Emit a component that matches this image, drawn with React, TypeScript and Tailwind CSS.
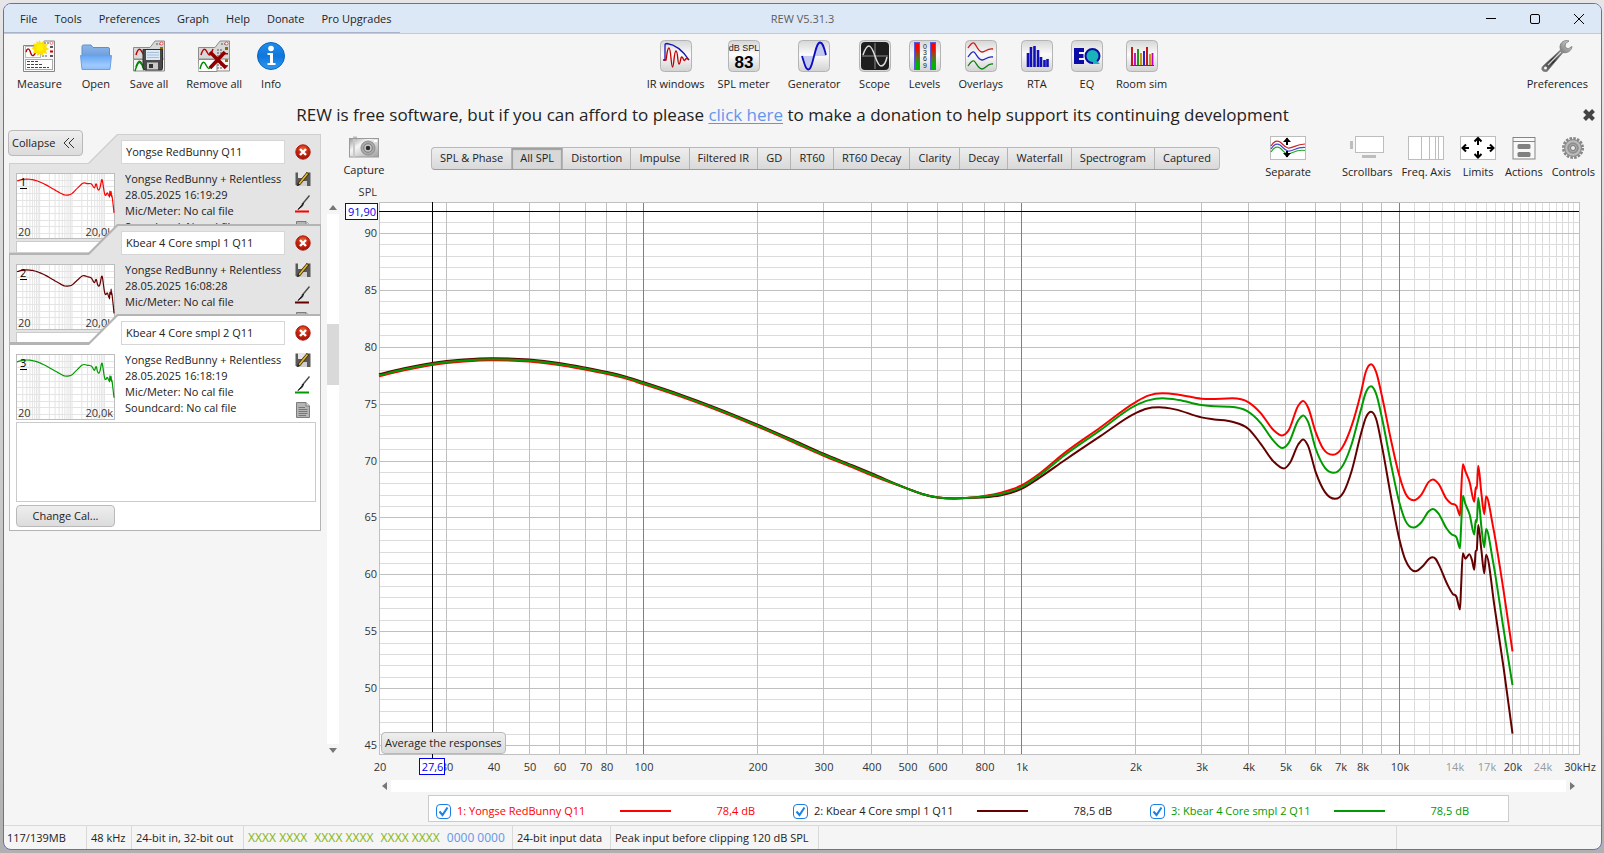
import { useLayoutEffect, useRef, useState } from "react";
import type { ReactNode } from "react";

type Point = [number, number];

/* ------------------------------------------------------------------ data */

const PLOT_W = 1200;
const PLOT_H = 551;
const X_MIN = Math.log10(20);
const X_SPAN = Math.log10(30000) - X_MIN;

const bass: Point[] = [
  [0, 172], [24, 166.3], [53, 160.7], [85, 157.3], [113, 156], [150, 157.3], [180, 160.7], [206, 165.3],
  [228, 169.7], [247, 174.3], [264, 179.7], [301, 192], [338, 205.7], [378, 222], [411, 236.3], [444, 251],
  [473, 262.7], [493, 271], [529, 285.3], [544, 290.7], [559, 294], [575, 295], [591, 294.3],
];

/* Treble samples use a finer grid: 2.8 steps per plot unit across, 3 down. */
const fine = (points: Point[]): Point[] => points.map(([x, y]) => [x / 2.8 + 621, y / 3 + 137]);
const lowEnd = (shift: number): Point[] => bass.map(([x, y]) => [x, x < 520 ? y + shift : y]);

const redCurve: Point[] = [
  ...lowEnd(1),
  ...fine([
    [-40, 466], [0, 457], [60, 435], [110, 400], [180, 338], [280, 262], [380, 185], [415, 166], [455, 159], [500, 163],
    [564, 175], [590, 176], [650, 174], [695, 185], [730, 218], [765, 268], [790, 285], [808, 270], [835, 196],
    [849, 182], [862, 200], [884, 275], [905, 325], [932, 343], [958, 322], [985, 255], [1010, 160], [1025, 92],
    [1039, 72], [1053, 95], [1070, 170], [1095, 300], [1118, 405], [1135, 458], [1158, 479], [1180, 462],
    [1200, 425], [1212, 417], [1228, 430], [1250, 475], [1262, 488], [1278, 496], [1288, 525], [1291, 460], [1296, 371],
    [1303, 392], [1315, 425], [1328, 484], [1332, 440], [1335, 445], [1339, 376], [1348, 460], [1356, 521],
    [1361, 467], [1380, 555], [1410, 750], [1435, 932],
  ]),
];

const greenCurve: Point[] = [
  ...lowEnd(0),
  ...fine([
    [-40, 467], [0, 461], [60, 440], [110, 405], [180, 345], [280, 270], [380, 195], [415, 180], [455, 174], [500, 179],
    [564, 194], [600, 198], [640, 199], [690, 211], [730, 248], [765, 300], [790, 323], [808, 308], [835, 240],
    [849, 225], [862, 243], [884, 325], [910, 382], [935, 397], [960, 375], [985, 310], [1010, 210], [1025, 155],
    [1039, 138], [1053, 160], [1070, 235], [1095, 372], [1118, 485], [1135, 540], [1158, 561], [1180, 545],
    [1200, 513], [1212, 505], [1228, 519], [1250, 563], [1265, 582], [1278, 590], [1288, 623], [1291, 560], [1296, 466],
    [1303, 490], [1315, 522], [1328, 582], [1332, 538], [1335, 545], [1339, 472], [1348, 560], [1356, 620],
    [1361, 565], [1380, 660], [1410, 865], [1435, 1033],
  ]),
];

const brownCurve: Point[] = [
  ...lowEnd(-1),
  ...fine([
    [-40, 470], [0, 465], [60, 445], [110, 412], [180, 360], [280, 288], [380, 218], [410, 205], [445, 201], [490, 207],
    [564, 231], [600, 237], [650, 244], [695, 265], [730, 310], [765, 362], [795, 384], [812, 367], [835, 312],
    [849, 297], [862, 315], [884, 395], [910, 455], [938, 475], [962, 455], [985, 390], [1010, 283], [1025, 230],
    [1039, 214], [1053, 235], [1070, 320], [1095, 470], [1118, 595], [1135, 658], [1149, 684], [1163, 692],
    [1185, 675], [1203, 653], [1211, 650], [1220, 655], [1230, 675], [1252, 730], [1268, 760], [1278, 768], [1288, 806],
    [1291, 740], [1296, 638], [1303, 654], [1314, 641], [1322, 660], [1328, 687], [1332, 632], [1335, 628],
    [1339, 553], [1348, 630], [1356, 698], [1361, 642], [1385, 800], [1410, 980], [1435, 1178],
  ]),
];

const RED = "#ff0000";
const BROWN = "#640000";
const GREEN = "#009b00";

const measurements = [
  { id: 1, name: "Yongse RedBunny Q11", date: "28.05.2025 16:19:29", level: "78,4 dB", color: RED, text: "text-[#ff0000]", line: "bg-[#ff0000]", curve: redCurve },
  { id: 2, name: "Kbear 4 Core smpl 1 Q11", date: "28.05.2025 16:08:28", level: "78,5 dB", color: BROWN, text: "text-[#222]", line: "bg-[#640000]", curve: brownCurve },
  { id: 3, name: "Kbear 4 Core smpl 2 Q11", date: "28.05.2025 16:18:19", level: "78,5 dB", color: GREEN, text: "text-[#009b00]", line: "bg-[#009b00]", curve: greenCurve },
];

/* Monotone cubic interpolation, so peaks do not overshoot their samples. */
function smoothPath(points: Point[]): string {
  const n = points.length;
  const gap: number[] = [];
  const slope: number[] = [];
  for (let i = 0; i < n - 1; i++) {
    gap.push(points[i + 1][0] - points[i][0]);
    slope.push((points[i + 1][1] - points[i][1]) / gap[i]);
  }
  const tangent = points.map((_, i) => {
    if (i === 0) return slope[0];
    if (i === n - 1) return slope[n - 2];
    const a = slope[i - 1];
    const b = slope[i];
    if (a * b <= 0) return 0;
    const mean = (a * gap[i] + b * gap[i - 1]) / (gap[i] + gap[i - 1]);
    return Math.sign(mean) * Math.min(Math.abs(mean), 3 * Math.abs(a), 3 * Math.abs(b));
  });
  let d = `M${points[0][0]} ${points[0][1]}`;
  for (let i = 0; i < n - 1; i++) {
    const [x0, y0] = points[i];
    const [x1, y1] = points[i + 1];
    const h = gap[i] / 3;
    d += `C${(x0 + h).toFixed(2)} ${(y0 + tangent[i] * h).toFixed(2)} ${(x1 - h).toFixed(2)} ${(y1 - tangent[i + 1] * h).toFixed(2)} ${x1.toFixed(2)} ${y1.toFixed(2)}`;
  }
  return d;
}

/* ----------------------------------------------------------------- icons */

function PanelTile({ children, dark = false }: { children: ReactNode; dark?: boolean }) {
  return (
    <svg width="32" height="32" viewBox="0 0 32 32">
      <defs>
        <linearGradient id="tile" x1="0" y1="0" x2="0" y2="1">
          <stop offset="0" stopColor="#d6d6d6" />
          <stop offset="0.45" stopColor="#fbfbfb" />
          <stop offset="1" stopColor="#d2d2d2" />
        </linearGradient>
      </defs>
      <rect x="0.5" y="0.5" width="31" height="31" rx="4" fill="url(#tile)" stroke="#b4b4b4" />
      {dark && <rect x="2" y="2" width="28" height="28" rx="4" fill="#1e1e1e" />}
      {children}
    </svg>
  );
}

function SheetBase({ y = 0, wave, tone }: { y?: number; wave: string; tone: string }) {
  return (
    <g transform={`translate(0 ${y})`}>
      <path d="M.5 7.500H17L22 1H31.500V19H.5Z" fill={tone} stroke="#8c8c8c" />
      <path d="M3 15C5 8 7 8 9 12S12 17 15 9" fill="none" stroke={wave} strokeWidth="1.500" />
      <path d="M19 10h6M19 13h5M19 16h6M23 4h5" stroke="#555" strokeDasharray="2 1" />
      <circle cx="28.500" cy="3.500" r="1.500" fill="#fff" stroke="#d33" strokeWidth="0.800" />
      <rect x="27" y="7" width="3" height="3" fill="#8a6a00" />
      <rect x="27" y="13" width="3" height="1.500" fill={wave} />
    </g>
  );
}

const MeasureIcon = () => (
  <svg width="32" height="32" viewBox="0 0 32 32">
    <path d="M.5 5.500H17L21 1H31.500V31.500H.5Z" fill="#f8f8f8" stroke="#858585" />
    <rect x="2.500" y="6.500" width="15" height="11" fill="#fff" stroke="#bbb" />
    <path d="M3 12C4 8 6 8 7 11S9 17 11 15S13 9 14 8" fill="none" stroke="#b80000" strokeWidth="1.400" />
    <path d="M19 16h6M21 3h6" stroke="#555" strokeDasharray="2 1" />
    <circle cx="28.500" cy="3" r="1.500" fill="#fff" stroke="#d66" strokeWidth="0.800" />
    <path d="M27 7h3M27 16h3" stroke="#555" strokeWidth="2" />
    <path d="M27 11.500h3" stroke="#c00" strokeWidth="2" />
    <rect x="2.500" y="19.500" width="27" height="10" fill="#fff" stroke="#aaa" />
    <path d="M4 21.500h11M4 24.500h16M4 27.500h22" stroke="#444" strokeDasharray="3 1" />
    <path d="M16.500 0l1.500 3 3-2 0 3.300 4-.3-2 3 3 2-3 1.500 1 3.500-3.500-1-1 3-2.500-2.200-2.500 2.200-1-3-3.500.6 1-3.600L8.500 8l3-1.500L10 3.500l3.500.5V.8l2 2Z" fill="#ffe100" />
    <circle cx="17" cy="7.500" r="3.500" fill="#fff200" />
  </svg>
);

const OpenIcon = () => (
  <svg width="32" height="32" viewBox="0 0 32 32">
    <defs>
      <linearGradient id="folderBack" x1="0" y1="0" x2="0" y2="1">
        <stop offset="0" stopColor="#8fb7e8" />
        <stop offset="1" stopColor="#6c9fdf" />
      </linearGradient>
      <linearGradient id="folderFront" x1="0" y1="0" x2="0" y2="1">
        <stop offset="0" stopColor="#66a4f2" />
        <stop offset="0.700" stopColor="#9fcaff" />
        <stop offset="1" stopColor="#8cbcf9" />
      </linearGradient>
    </defs>
    <path d="M2 6.500Q2 5 3.500 5H11l2 2.500H28Q29.500 7.500 29.500 9V16H2Z" fill="url(#folderBack)" stroke="#5b8fd2" />
    <path d="M.5 15.500H31.500L30 29.500H2Z" fill="url(#folderFront)" stroke="#6aa1e6" />
  </svg>
);

const SaveAllIcon = () => (
  <svg width="32" height="32" viewBox="0 0 32 32">
    <SheetBase y={12} wave="#008a00" tone="#f4f4f4" />
    <SheetBase wave="#b80000" tone="#d8d8d8" />
    <path d="M2 31C5 21 7 21 9 25S10 29 11 30" fill="none" stroke="#008a00" strokeWidth="1.500" />
    <path d="M10 9.500H29.500V28.500Q29.500 30 28 30H12L10 28Z" fill="#4a4a4a" stroke="#2c2c2c" />
    <rect x="13" y="10" width="14" height="10" fill="#dceaf6" />
    <path d="M14 12.500h12M14 15h12M14 17.500h12" stroke="#a8bfd6" />
    <rect x="14" y="22.500" width="11" height="7" fill="#c9c9c9" />
    <rect x="16" y="24" width="4" height="4" fill="#333" />
  </svg>
);

const RemoveAllIcon = () => (
  <svg width="32" height="32" viewBox="0 0 32 32">
    <SheetBase y={12} wave="#008a00" tone="#f4f4f4" />
    <SheetBase wave="#b80000" tone="#d8d8d8" />
    <path d="M1 19.500H19V31.500H.5" fill="#fff" stroke="#8c8c8c" />
    <path d="M2 29C4 21 6 21 8 25S11 30 14 25" fill="none" stroke="#008a00" strokeWidth="1.500" />
    <path d="M12 12L28 28M27 12L12 28" stroke="#8e0000" strokeWidth="3.600" />
  </svg>
);

const InfoIcon = () => (
  <svg width="32" height="32" viewBox="0 0 32 32">
    <defs>
      <linearGradient id="infoFill" x1="0" y1="0" x2="0" y2="1">
        <stop offset="0" stopColor="#1f8fea" />
        <stop offset="0.500" stopColor="#0f76dc" />
        <stop offset="1" stopColor="#2a9af2" />
      </linearGradient>
    </defs>
    <circle cx="16" cy="16" r="13.500" fill="url(#infoFill)" stroke="#0b63c4" />
    <circle cx="16" cy="8.500" r="2.800" fill="#fff" />
    <path d="M12.500 13H18V23H20.500V25H12.500V23H15V15H12.500Z" fill="#fff" />
  </svg>
);

const IrIcon = () => (
  <PanelTile>
    <path d="M3 20H5V5Q5 3.500 7 3.500Q19 5 29 20" fill="none" stroke="#1717b8" strokeWidth="1.300" />
    <path d="M4 20H6C7 16 7 8 9 8S11 27 12.500 27 14 11 16 11 17.500 24 19 24 20.500 16 22 17 24 22 25 20 27 18 29 20" fill="none" stroke="#c00000" strokeWidth="1.300" />
  </PanelTile>
);

const SplIcon = () => (
  <PanelTile>
    <text x="16" y="11" textAnchor="middle" fontSize="9" className="font-['Liberation_Sans',sans-serif]" fill="#222">dB SPL</text>
    <text x="16" y="28" textAnchor="middle" fontSize="17" fontWeight="bold" className="font-['Liberation_Sans',sans-serif]" fill="#000">83</text>
  </PanelTile>
);

const GeneratorIcon = () => (
  <PanelTile>
    <path d="M4 16Q7 29 10 29.500T16 16Q19 3 22 2.500T28 14Q28 16 28 16H4Z" fill="#c3c8ee" />
    <path d="M4 16C7 26 8 29.500 10.500 29.500C15 29.500 17 2.500 22 2.500C25 2.500 26 8 28 15" fill="none" stroke="#0b0bc0" strokeWidth="1.800" />
  </PanelTile>
);

const ScopeIcon = () => (
  <PanelTile dark>
    <path d="M16 3V29M3 16H29" stroke="#8c8c8c" />
    <path d="M4 15C6 9 8 6 10 6C15 6 17 26 22 26C25 26 27 22 28 17" fill="none" stroke="#ddd" strokeWidth="1.500" />
  </PanelTile>
);

const LevelsIcon = () => (
  <PanelTile>
    <defs>
      <linearGradient id="meter" x1="0" y1="0" x2="0" y2="1">
        <stop offset="0.200" stopColor="#ff0000" />
        <stop offset="0.600" stopColor="#4f7a20" />
        <stop offset="0.800" stopColor="#00b400" />
      </linearGradient>
    </defs>
    <rect x="5.500" y="2.500" width="5" height="27" fill="url(#meter)" stroke="#5a5ae0" />
    <rect x="21.500" y="2.500" width="5" height="27" fill="url(#meter)" stroke="#5a5ae0" />
    <g fontSize="7" textAnchor="middle" className="font-['Liberation_Sans',sans-serif]" fill="#222">
      <text x="16" y="9">0</text>
      <text x="16" y="15">3</text>
      <text x="16" y="21">6</text>
      <text x="16" y="28">9</text>
    </g>
  </PanelTile>
);

const OverlaysIcon = () => (
  <PanelTile>
    <g fill="none" strokeWidth="1.300">
      <path d="M3 8C5 5 7 2 9 3S13 12 17 12 22 8 28 9" stroke="#cc1a1a" />
      <path d="M3 17C5 14 7 11 9 12S13 20 17 20 22 16 28 17" stroke="#2323cc" />
      <path d="M3 26C5 23 7 20 9 21S13 29 17 29 22 23 28 24" stroke="#118011" />
    </g>
  </PanelTile>
);

const RtaIcon = () => (
  <PanelTile>
    <path d="M7 13V27M10 7V27M13.500 6V27M17 10V27M20 17V27M23.500 20V27M26.500 19V27" stroke="#1010b4" strokeWidth="2.600" />
  </PanelTile>
);

const EqIcon = () => (
  <PanelTile>
    <path d="M3 8H13V12H8V14H12.500V18H8V20H13V24H3Z" fill="#0b0ba6" />
    <circle cx="21.500" cy="16" r="7" fill="#19b4b8" stroke="#0b0ba6" strokeWidth="2" />
    <path d="M22 17L29 24H22Z" fill="#19b4b8" />
  </PanelTile>
);

const RoomIcon = () => (
  <PanelTile>
    <g strokeWidth="1.800">
      <path d="M6 7V25M21 7V25" stroke="#c00000" />
      <path d="M9 13V25M26.500 13V25" stroke="#c000c0" />
      <path d="M12 9V25" stroke="#0a8a0a" />
      <path d="M15 13V25M24 14V25" stroke="#c08a00" />
      <path d="M18 11V25" stroke="#1010c0" />
    </g>
    <path d="M4.500 25.500H28" stroke="#444" />
  </PanelTile>
);

const WrenchIcon = () => (
  <svg width="32" height="32" viewBox="0 0 32 32">
    <defs>
      <linearGradient id="steel" x1="0" y1="1" x2="1" y2="0">
        <stop offset="0" stopColor="#8a8a8a" />
        <stop offset="0.350" stopColor="#2f2f2f" />
        <stop offset="0.600" stopColor="#777" />
        <stop offset="1" stopColor="#dedede" />
      </linearGradient>
    </defs>
    <path d="M28 1C24-.5 19 2 19 7L19.500 10L2 26C0 28 .5 31 3.500 31.500C5.500 32 7 31 8 29L22 12.500C26 13.500 30.500 11 31 6.500L27 9L24 7L24.500 3.500Z" fill="url(#steel)" stroke="#777" strokeWidth="0.800" />
    <path d="M7 25L20 12" stroke="#d5d5d5" strokeWidth="1.200" />
    <circle cx="4.500" cy="28" r="1.500" fill="#f5f5f5" />
  </svg>
);

const CameraIcon = () => (
  <svg width="32" height="22" viewBox="0 0 32 22">
    <defs>
      <linearGradient id="camera" x1="0" y1="0" x2="1" y2="1">
        <stop offset="0" stopColor="#9a9a9a" />
        <stop offset="0.350" stopColor="#f6f6f6" />
        <stop offset="1" stopColor="#9d9d9d" />
      </linearGradient>
    </defs>
    <path d="M5 .5h4V3H5Z" fill="#bbb" />
    <rect x="1.500" y="2.500" width="29" height="18.500" fill="url(#camera)" stroke="#9a9a9a" />
    <path d="M6 3V21" stroke="#c9c9c9" strokeWidth="2" />
    <circle cx="20" cy="12" r="7" fill="#a9a9a9" stroke="#8d8d8d" />
    <circle cx="20" cy="12" r="4.200" fill="#cfcfcf" stroke="#777" />
    <circle cx="20" cy="12" r="2.300" fill="#2d2d2d" />
    <rect x="26" y="4" width="3" height="2" fill="#fff" />
  </svg>
);

const SeparateIcon = () => (
  <svg width="36" height="24" viewBox="0 0 36 24">
    <rect x="0.500" y="0.500" width="35" height="23" fill="#fff" stroke="#bdbdbd" />
    <g fill="none" strokeWidth="1.200">
      <path d="M1 10C4 5 7 4 10 6S14 11 18 12 26 8 35 8" stroke="#c22" />
      <path d="M1 13C4 8 7 7 10 9S14 14 18 15 26 11 35 11.500" stroke="#44c" />
      <path d="M1 16C4 11 7 10 10 12S14 18 18 18 26 13 35 14.500" stroke="#2a2" />
    </g>
    <path d="M17 9V2M17 15V21" stroke="#000" strokeWidth="2" />
    <path d="M13 6L17 1.500L21 6ZM13 17L17 21.500L21 17Z" fill="#000" />
  </svg>
);

const ScrollbarsIcon = () => (
  <svg width="36" height="24" viewBox="0 0 36 24">
    <rect x="6.500" y="0.500" width="28" height="16" fill="#fff" stroke="#bdbdbd" />
    <rect x="1" y="5" width="3" height="8" fill="#bdbdbd" />
    <rect x="13" y="19" width="14" height="3" fill="#bdbdbd" />
  </svg>
);

const FreqAxisIcon = () => (
  <svg width="36" height="24" viewBox="0 0 36 24">
    <rect x="0.500" y="0.500" width="35" height="23" fill="#fff" stroke="#bdbdbd" />
    <path d="M13.500 0V24M21.500 0V24M27.500 0V24M30.500 0V24" stroke="#bdbdbd" />
  </svg>
);

const LimitsIcon = () => (
  <svg width="36" height="24" viewBox="0 0 36 24">
    <rect x="0.500" y="0.500" width="35" height="23" fill="#fff" stroke="#bdbdbd" />
    <path d="M18 9V3M14.500 5.500L18 2L21.500 5.500M18 15V21M14.500 18L18 21.500L21.500 18M9 12H3M6 8.500L2.500 12L6 15.500M27 12H33M30 8.500L33.500 12L30 15.500" fill="none" stroke="#000" strokeWidth="2" />
  </svg>
);

const ActionsIcon = () => (
  <svg width="24" height="24" viewBox="0 0 24 24">
    <rect x="1" y="1.500" width="22" height="21.500" fill="#f8f8f8" stroke="#858585" />
    <path d="M1 5.500H23" stroke="#858585" />
    <rect x="5.500" y="8" width="13" height="5" rx="1.500" fill="#808080" />
    <rect x="5.500" y="16" width="13" height="5" rx="1.500" fill="#808080" />
  </svg>
);

const GearIcon = () => (
  <svg width="24" height="24" viewBox="0 0 24 24">
    <circle cx="12" cy="12" r="9.500" fill="none" stroke="#858585" strokeWidth="3" strokeDasharray="2.500 1.230" />
    <circle cx="12" cy="12" r="6.500" fill="#a5a5a5" stroke="#8f8f8f" strokeWidth="5" />
    <circle cx="12" cy="12" r="6.800" fill="none" stroke="#bcbcbc" strokeWidth="2" />
    <circle cx="12" cy="12" r="2.500" fill="#ececec" stroke="#777" />
  </svg>
);

const DeleteIcon = () => (
  <svg width="16" height="16" viewBox="0 0 16 16">
    <defs>
      <radialGradient id="stop" cx="0.500" cy="0.300" r="0.700">
        <stop offset="0" stopColor="#e8683c" />
        <stop offset="0.500" stopColor="#c82810" />
        <stop offset="1" stopColor="#9c1208" />
      </radialGradient>
    </defs>
    <circle cx="8" cy="8" r="7.200" fill="url(#stop)" stroke="#b01c0c" />
    <path d="M5 5L11 11M11 5L5 11" stroke="#fff" strokeWidth="2.400" />
  </svg>
);

const SaveIcon = () => (
  <svg width="16" height="16" viewBox="0 0 16 16">
    <path d="M.5 1.500H15.500V15H2L.5 13.500Z" fill="#5a5a5a" />
    <rect x="3" y="1" width="8" height="6" fill="#e6e6e6" />
    <rect x="4" y="10" width="8" height="5" fill="#cfcfcf" />
    <path d="M3.500 13.500L13 2" stroke="#3b2d00" strokeWidth="3.200" />
    <path d="M4 13L12.500 2.500" stroke="#e9b93a" strokeWidth="1.600" />
    <path d="M2 15L3 12L5 13.500Z" fill="#222" />
  </svg>
);

const BrushIcon = ({ color }: { color: string }) => (
  <svg width="16" height="18" viewBox="0 0 16 18">
    <path d="M14.500.5L7 9.500" stroke="#4a4a4a" strokeWidth="1.400" />
    <path d="M8.500 8L3 14.500L7.500 11Z" fill="#222" stroke="#222" />
    <path d="M0 16.500H14" stroke={color} strokeWidth="2" />
  </svg>
);

const NotesIcon = () => (
  <svg width="16" height="16" viewBox="0 0 16 16">
    <path d="M1.500.5H11L14.500 4V15.500H1.500Z" fill="#b5b5b5" stroke="#7c7c7c" />
    <path d="M11 .5V4H14.500" fill="#e5e5e5" stroke="#7c7c7c" />
    <path d="M3.500 5.500H10M3.500 7.500H12.500M3.500 9.500H12.500M3.500 11.500H12.500M3.500 13.500H11" stroke="#777" />
  </svg>
);

/* ------------------------------------------------------------ components */

function ToolButton({ label, icon, tight = false }: { label: string; icon: ReactNode; tight?: boolean }) {
  return (
    <button type="button" className={`flex flex-col items-center gap-1 ${tight ? "-ml-[5px]" : ""}`}>
      {icon}
      <span className="whitespace-nowrap leading-4">{label}</span>
    </button>
  );
}

function Titlebar() {
  return (
    <header className="relative flex h-[30px] shrink-0 items-center justify-between border-b border-[#c3cad6] bg-[#dde8f6]">
      <nav className="flex h-full items-center gap-[17px] border-b border-[#a9b4ca] pl-4 pr-2 pt-px">
        {["File", "Tools", "Preferences", "Graph", "Help", "Donate", "Pro Upgrades"].map((item) => (
          <button type="button" key={item} className="leading-4">{item}</button>
        ))}
      </nav>
      <h1 className="pointer-events-none absolute inset-x-0 pt-px text-center text-[#5c5c5c]">REW V5.31.3</h1>
      <div className="flex items-center gap-8 pr-4">
        <button type="button" aria-label="Minimize" className="flex h-6 w-3 items-center justify-center">
          <svg width="12" height="12" viewBox="0 0 12 12"><path d="M1 5.500H11" stroke="#000" /></svg>
        </button>
        <button type="button" aria-label="Maximize" className="flex h-6 w-3 items-center justify-center">
          <svg width="12" height="12" viewBox="0 0 12 12"><rect x="1.500" y="1.500" width="9" height="9" rx="1.500" fill="none" stroke="#000" /></svg>
        </button>
        <button type="button" aria-label="Close" className="flex h-6 w-3 items-center justify-center">
          <svg width="12" height="12" viewBox="0 0 12 12"><path d="M1 1L11 11M11 1L1 11" stroke="#000" /></svg>
        </button>
      </div>
    </header>
  );
}

function MainToolbar() {
  return (
    <div className="flex shrink-0 items-start justify-between pb-1 pl-[13px] pr-[13px] pt-[6px]">
      <div className="flex gap-[18px]">
        <ToolButton label="Measure" icon={<MeasureIcon />} />
        <ToolButton label="Open" icon={<OpenIcon />} />
        <ToolButton label="Save all" icon={<SaveAllIcon />} />
        <ToolButton label="Remove all" icon={<RemoveAllIcon />} />
        <ToolButton label="Info" icon={<InfoIcon />} tight />
      </div>
      <div className="flex gap-[18px]">
        <ToolButton label="IR windows" icon={<IrIcon />} />
        <ToolButton label="SPL meter" icon={<SplIcon />} tight />
        <ToolButton label="Generator" icon={<GeneratorIcon />} />
        <ToolButton label="Scope" icon={<ScopeIcon />} />
        <ToolButton label="Levels" icon={<LevelsIcon />} />
        <ToolButton label="Overlays" icon={<OverlaysIcon />} />
        <ToolButton label="RTA" icon={<RtaIcon />} />
        <ToolButton label="EQ" icon={<EqIcon />} />
        <ToolButton label="Room sim" icon={<RoomIcon />} tight />
      </div>
      <ToolButton label="Preferences" icon={<WrenchIcon />} />
    </div>
  );
}

function DonationBanner() {
  return (
    <div className="flex h-[30px] shrink-0 items-center pr-1 pt-2">
      <p className="flex-1 text-center text-[17px] leading-6">
        REW is free software, but if you can afford to please{" "}
        <a href="#donate" className="text-[#6495ed] underline underline-offset-2">click here</a> to make a donation to help support its continuing development
      </p>
      <button type="button" aria-label="Dismiss" className="p-px">
        <svg width="14" height="14" viewBox="0 0 14 14">
          <path d="M2.500 2.500L11.500 11.500M11.500 2.500L2.500 11.500" stroke="#444" strokeWidth="4" />
        </svg>
      </button>
    </div>
  );
}

function Thumbnail({ id, color, curve }: { id: number; color: string; curve: Point[] }) {
  const scaled = curve.map(([x, y]): Point => [1 + x * 0.0856, 6 + (y - 156) * 0.116]);
  const columns: number[] = [];
  for (const decade of [10, 100, 1000, 10000]) {
    for (let k = 1; k < 10; k++) {
      const f = decade * k;
      if (f > 20 && f < 20000) columns.push(1 + (Math.log10(f) - X_MIN) * 32.4);
    }
  }
  return (
    <svg width="99" height="66" viewBox="0 0 99 66" className="shrink-0">
      <rect x="0.500" y="0.500" width="98" height="65" fill="#fff" stroke="#bdbdbd" />
      <g stroke="#e4e4e4">
        {columns.map((x) => <path key={x} d={`M${x} 1V65`} />)}
        {[7, 13, 20, 27, 33, 40, 47, 53, 60].map((y) => <path key={y} d={`M1 ${y + 0.5}H98`} />)}
      </g>
      <path d={smoothPath(scaled)} fill="none" stroke={color} strokeWidth="1.200" />
      <g fontSize="11" fill="#333">
        <text x="4" y="13" fill="#000">{id}</text>
        <path d="M4 15.500H11" stroke="#000" />
        <text x="2" y="63">20</text>
        <text x="97" y="63" textAnchor="end">20,0k</text>
      </g>
    </svg>
  );
}

const TAB_CLIP = "[clip-path:polygon(0_29px,79px_29px,108px_0,100%_0,100%_100%,0_100%)]";

function MeasurementCard({ item, active, stacked }: { item: (typeof measurements)[number]; active: boolean; stacked: boolean }) {
  return (
    <article
      className={`relative overflow-hidden p-px ${TAB_CLIP} ${stacked ? "-mt-[29px] bg-[#b4b4b4] pt-[2px]" : "bg-[#cfcfcf]"} ${active ? "" : "h-[119px]"}`}
    >
      <div className={`${TAB_CLIP} ${active ? "bg-white" : "h-full bg-[#e4e4e4]"}`}>
        <div className="flex h-9 items-center justify-between pb-[3px] pl-[111px] pr-[9px]">
          <input
            aria-label={`Name of measurement ${item.id}`}
            defaultValue={item.name}
            className="h-6 w-[164px] border border-[#d6d6d6] bg-white px-1 text-[#222] outline-none"
          />
          <button type="button" aria-label="Delete measurement"><DeleteIcon /></button>
        </div>
        <div className="flex items-start pl-[6px] pr-[9px]">
          <div className="pt-[2px]"><Thumbnail id={item.id} color={item.color} curve={item.curve} /></div>
          <div className="ml-[10px] w-[160px] overflow-hidden whitespace-nowrap leading-4">
            <p>Yongse RedBunny + Relentless</p>
            <p>{item.date}</p>
            <p>Mic/Meter: No cal file</p>
            <p>Soundcard: No cal file</p>
          </div>
          <div className="ml-auto flex flex-col gap-2">
            <button type="button" aria-label="Save measurement"><SaveIcon /></button>
            <button type="button" aria-label="Trace colour"><BrushIcon color={item.color} /></button>
            <button type="button" aria-label="Notes"><NotesIcon /></button>
          </div>
        </div>
        <div className="pb-[3px] pl-[6px] pr-1 pt-[2px]">
          <textarea aria-label="Notes text" className="block h-20 w-full resize-none border border-[#cbcbcb] bg-white outline-none" />
          <button type="button" className="mt-[3px] h-[22px] w-[99px] rounded border border-[#b9b9b9] bg-gradient-to-b from-[#eeeeee] to-[#dcdcdc]">
            Change Cal...
          </button>
        </div>
      </div>
    </article>
  );
}

function Sidebar() {
  return (
    <aside className="flex w-[336px] shrink-0">
      <div className="w-[317px] pl-[5px]">
        <button
          type="button"
          className="relative -ml-px flex h-[26px] w-[75px] items-center gap-2 rounded border border-[#b9b9b9] bg-gradient-to-b from-[#eeeeee] to-[#dcdcdc] pl-[3px]"
        >
          Collapse
          <svg width="12" height="12" viewBox="0 0 12 12"><path d="M6 1L1 6L6 11M11 1L6 6L11 11" fill="none" stroke="#333" /></svg>
        </button>
        <div className="-mt-[22px]">
          {measurements.map((item, index) => (
            <MeasurementCard key={item.id} item={item} active={index === 2} stacked={index > 0} />
          ))}
        </div>
      </div>
      <div className="ml-1 flex w-[15px] flex-col items-center pb-[69px] pt-[75px]">
        <svg width="8" height="5" viewBox="0 0 8 5"><path d="M0 5L4 0L8 5Z" fill="#777" /></svg>
        <div className="mt-1 w-3 flex-1 bg-white pt-[110px]">
          <div className="h-[61px] bg-[#d9d9d9]" />
        </div>
        <svg width="8" height="5" viewBox="0 0 8 5" className="mt-1"><path d="M0 0L4 5L8 0Z" fill="#777" /></svg>
      </div>
    </aside>
  );
}

const xTicks: [number, string, boolean][] = [
  [20, "20", false], [30, "30", false], [40, "40", false], [50, "50", false], [60, "60", false], [70, "70", false], [80, "80", false],
  [100, "100", false], [200, "200", false], [300, "300", false], [400, "400", false], [500, "500", false], [600, "600", false],
  [800, "800", false], [1000, "1k", false], [2000, "2k", false], [3000, "3k", false], [4000, "4k", false], [5000, "5k", false],
  [6000, "6k", false], [7000, "7k", false], [8000, "8k", false], [10000, "10k", false], [14000, "14k", true], [17000, "17k", true],
  [20000, "20k", false], [24000, "24k", true], [30000, "30kHz", false],
];

function gridFrequencies(): [number, string][] {
  const lines: [number, string][] = [];
  for (const decade of [10, 100, 1000]) {
    for (let k = 1; k < 10; k++) {
      const f = decade * k;
      if (f > 20) lines.push([f, k === 1 ? "#808080" : "#c0c0c0"]);
    }
  }
  for (let k = 10; k < 30; k++) lines.push([k * 1000, k === 10 ? "#808080" : k === 20 ? "#c0c0c0" : "#dcdcdc"]);
  return lines;
}

const DB_TOP = 92.64;
const PX_PER_DB = 11.356;

function SplChart() {
  const box = useRef<HTMLDivElement>(null);
  const [size, setSize] = useState({ w: 1261, h: 591 });

  useLayoutEffect(() => {
    const node = box.current;
    if (!node) return;
    const update = () => setSize({ w: node.clientWidth, h: node.clientHeight });
    update();
    const observer = new ResizeObserver(update);
    observer.observe(node);
    return () => observer.disconnect();
  }, []);

  const left = 39;
  const top = 18;
  const width = Math.max(size.w - left - 22, 100);
  const height = Math.max(size.h - top - 22, 100);
  const px = (f: number) => left + ((Math.log10(f) - X_MIN) / X_SPAN) * width;
  const py = (db: number) => top + (DB_TOP - db) * PX_PER_DB * (height / PLOT_H);
  const snap = (v: number) => Math.round(v) + 0.5;
  const scale = (points: Point[]): Point[] =>
    points.map(([x, y]) => [left + (x * width) / PLOT_W, top + (y * height) / PLOT_H]);

  const levels: number[] = [];
  for (let db = 45; db < 92; db++) levels.push(db);
  const ordered = [...levels.filter((v) => v % 5), ...levels.filter((v) => v % 5 === 0)];
  const columns = gridFrequencies();
  const cx = snap(px(27.6));
  const cy = snap(py(91.9));

  return (
    <div ref={box} className="relative min-h-0 flex-1 overflow-hidden">
      <svg width={size.w} height={size.h} className="absolute inset-0" role="img" aria-label="SPL against frequency">
        <rect x={left} y={top} width={width} height={height} fill="#fff" />
        <g shapeRendering="crispEdges">
          {columns.filter(([, c]) => c === "#dcdcdc").map(([f, c]) => (
            <line key={f} x1={snap(px(f))} x2={snap(px(f))} y1={top} y2={top + height} stroke={c} />
          ))}
          {ordered.map((db) => (
            <line key={db} x1={left} x2={left + width} y1={snap(py(db))} y2={snap(py(db))} stroke={db % 5 ? "#dcdcdc" : "#c0c0c0"} />
          ))}
          {columns.filter(([, c]) => c !== "#dcdcdc").map(([f, c]) => (
            <line key={f} x1={snap(px(f))} x2={snap(px(f))} y1={top} y2={top + height} stroke={c} />
          ))}
          <rect x={left + 0.5} y={top - 0.5} width={width} height={height} fill="none" stroke="#c0c0c0" />
          <line x1={left} x2={left + width} y1={cy} y2={cy} stroke="#000" />
          <line x1={cx} x2={cx} y1={top - 1} y2={top + height + 3} stroke="#000" />
        </g>
        {measurements.map((m) => (
          <path key={m.id} d={smoothPath(scale(m.curve))} fill="none" stroke={m.color} strokeWidth="2" strokeLinejoin="round" />
        ))}
        <g fontSize="11" fill="#333">
          <text x={left - 2} y="11" textAnchor="end">SPL</text>
          {levels.filter((v) => v % 5 === 0).map((db) => (
            <text key={db} x={left - 2} y={Math.round(py(db)) + 4} textAnchor="end">{db}</text>
          ))}
          {xTicks.map(([f, label, minor]) => (
            <text key={f} x={Math.round(px(f)) + 1} y={top + height + 16} textAnchor="middle" fill={minor ? "#999" : "#333"}>{label}</text>
          ))}
        </g>
        <g fill="#fff" stroke="#0000ee" shapeRendering="crispEdges">
          <rect x={left - 33.5} y={cy - 8} width="32" height="16" />
          <rect x={cx - 13} y={top + height + 3.5} width="25" height="16" />
        </g>
        <g fontSize="11" fill="#0000ee">
          <text x={left - 17} y={cy + 4} textAnchor="middle">91,90</text>
          <text x={cx} y={top + height + 16} textAnchor="middle">27,6</text>
        </g>
      </svg>
      <button
        type="button"
        className="absolute bottom-[23px] left-[41px] h-[22px] rounded border border-[#b9b9b9] bg-gradient-to-b from-[#eeeeee] to-[#dcdcdc] px-[3px] leading-4"
      >
        Average the responses
      </button>
    </div>
  );
}

const tabs = [
  "SPL & Phase", "All SPL", "Distortion", "Impulse", "Filtered IR", "GD", "RT60", "RT60 Decay", "Clarity", "Decay",
  "Waterfall", "Spectrogram", "Captured",
];

function GraphHeader() {
  const [selected, setSelected] = useState("All SPL");
  return (
    <div className="flex h-[55px] shrink-0 items-start justify-between pl-[3px] pr-[6px]">
      <div className="flex items-start">
        <button type="button" className="flex w-[42px] flex-col items-center gap-1 pt-[6px]">
          <CameraIcon />
          <span className="leading-4">Capture</span>
        </button>
        <div className="ml-[46px] mt-[17px] flex h-[23px] w-[789px] rounded border border-[#b9b9b9] border-b-[#9c9c9c] bg-gradient-to-b from-[#eeeeee] to-[#d9d9d9]">
          {tabs.map((tab) => (
            <button
              type="button"
              key={tab}
              onClick={() => setSelected(tab)}
              className={`flex-auto whitespace-nowrap border-r border-[#b4b4b4] last:border-r-0 ${
                tab === selected ? "bg-[#d8d8d8] shadow-[inset_0_1px_1px_1px_#a0a0a0]" : ""
              }`}
            >
              {tab}
            </button>
          ))}
        </div>
      </div>
      <div className="flex gap-[9px] pt-[6px]">
        <div className="mr-[22px] flex"><ToolButton label="Separate" icon={<SeparateIcon />} /></div>
        <ToolButton label="Scrollbars" icon={<ScrollbarsIcon />} />
        <ToolButton label="Freq. Axis" icon={<FreqAxisIcon />} />
        <ToolButton label="Limits" icon={<LimitsIcon />} />
        <ToolButton label="Actions" icon={<ActionsIcon />} />
        <ToolButton label="Controls" icon={<GearIcon />} />
      </div>
    </div>
  );
}

function Legend() {
  return (
    <div className="ml-[88px] mr-[92px] mt-[3px] flex h-[27px] shrink-0 items-center border border-[#cbcbcb] bg-white pl-[7px] pt-[5px]">
      {measurements.map((item) => (
        <div key={item.id} className="flex w-[357px] items-center">
          <label className={`flex w-[184px] items-center gap-[6px] whitespace-nowrap ${item.text}`}>
            <span className="relative flex">
              <input
                type="checkbox"
                defaultChecked
                className="peer size-[15px] appearance-none rounded border border-[#1a80e6] bg-white"
              />
              <svg viewBox="0 0 15 15" className="pointer-events-none absolute inset-0 hidden size-[15px] peer-checked:block">
                <path d="M3.500 7.500L6.500 11L11.500 3.500" fill="none" stroke="#1a80e6" strokeWidth="2" />
              </svg>
            </span>
            {item.id}: {item.name}
          </label>
          <span className={`h-[2px] w-[51px] ${item.line}`} />
          <span className={`w-[84px] text-right ${item.text}`}>{item.level}</span>
        </div>
      ))}
    </div>
  );
}

function StatusBar() {
  return (
    <footer className="flex h-6 shrink-0 items-stretch whitespace-nowrap border-t border-[#d9d9d9] leading-6">
      <span className="w-[83px] border-r border-[#d9d9d9] pl-[3px]">117/139MB</span>
      <span className="w-[45px] border-r border-[#d9d9d9] pl-1">48 kHz</span>
      <span className="w-[112px] border-r border-[#d9d9d9] pl-1">24-bit in, 32-bit out</span>
      <span className="flex w-[269px] gap-[7px] border-r border-[#d9d9d9] pl-1 font-['Noto_Sans',sans-serif] text-[12px] text-[#8ab81a]">
        {[0, 1, 2].map((group) => (
          <span key={group} className="flex gap-[3px]">
            <span>XXXX</span>
            <span>XXXX</span>
          </span>
        ))}
        <span className="flex gap-[3px] text-[#6b9ae8]">
          <span>0000</span>
          <span>0000</span>
        </span>
      </span>
      <span className="w-[98px] border-r border-[#d9d9d9] pl-1">24-bit input data</span>
      <span className="w-[208px] border-r border-[#d9d9d9] pl-1">Peak input before clipping 120 dB SPL</span>
      <span className="flex-1 border-r border-[#d9d9d9]" />
      <span className="w-[204px]" />
    </footer>
  );
}

export default function App() {
  return (
    <div className="h-screen min-h-[640px] bg-gradient-to-b from-[#e6e6e6] via-[#cfcfcf] to-[#b0b0b0] pb-[3px] pl-[3px] pr-[2px] pt-[3px] font-['Open_Sans','Noto_Sans',sans-serif] text-[11px] text-[#222]">
      <div className="flex h-full flex-col overflow-hidden rounded-lg border border-[#6a6ac4] bg-[#f5f5f5]">
        <Titlebar />
        <MainToolbar />
        <DonationBanner />
        <div className="flex min-h-0 flex-1 pb-[3px] pt-1">
          <Sidebar />
          <main className="flex min-w-0 flex-1 flex-col">
            <GraphHeader />
            <SplChart />
            <div className="mt-[3px] flex shrink-0 items-center gap-1 pl-[42px] pr-[26px]">
              <svg width="5" height="8" viewBox="0 0 5 8"><path d="M5 0L0 4L5 8Z" fill="#777" /></svg>
              <div className="h-3 flex-1 bg-white" />
              <svg width="5" height="8" viewBox="0 0 5 8"><path d="M0 0L5 4L0 8Z" fill="#777" /></svg>
            </div>
            <Legend />
          </main>
        </div>
        <StatusBar />
      </div>
    </div>
  );
}
